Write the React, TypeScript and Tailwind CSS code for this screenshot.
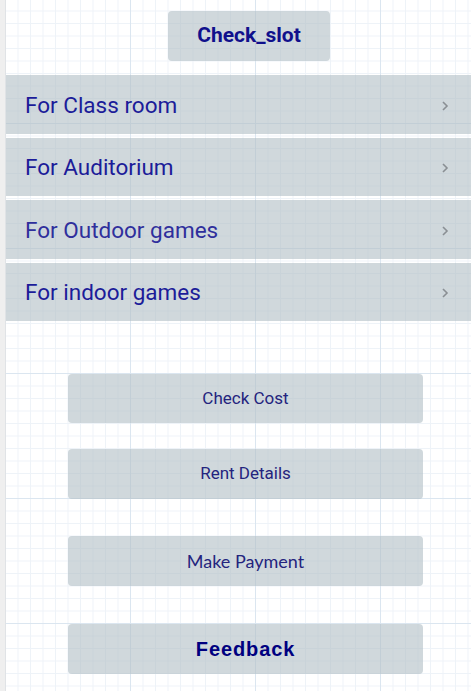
import React from "react";

const rows = [
  { label: "For Class room", color: "text-[#1c1c99]" },
  { label: "For Auditorium", color: "text-[#1c1c99]" },
  { label: "For Outdoor games", color: "text-[#2f2f9c]" },
  { label: "For indoor games", color: "text-[#1c1c99]" },
];

function Chevron() {
  return (
    <svg width="8" height="12" viewBox="0 0 8 12" className="shrink-0">
      <path d="M2 2 L6 6 L2 10" fill="none" stroke="#8a8f94" strokeWidth="1.6" />
    </svg>
  );
}

export default function App() {
  return (
    <div className="flex h-[691px] w-full bg-white overflow-hidden">
      <div className="w-[6px] shrink-0 bg-[#efefef] border-r border-[#e0e3e6]" />
      <div className="relative flex-1 bg-white bg-[linear-gradient(to_right,#dbe6f0_1px,transparent_1px),linear-gradient(to_bottom,#dbe6f0_1px,transparent_1px),linear-gradient(to_right,#eef3f8_1px,transparent_1px),linear-gradient(to_bottom,#eef3f8_1px,transparent_1px)] [background-size:125px_125px,125px_125px,12.5px_12.5px,12.5px_12.5px] [background-position:-1px_-2px,-1px_-2px,-1px_-2px,-1px_-2px]">
        <div className="flex flex-col">
          <div className="flex pt-[11px] pl-[162px]">
            <button className="w-[162px] h-[50px] rounded-[4px] bg-[#b0bec5]/60 font-['Roboto',sans-serif] font-bold text-[21px] text-[#10108c]">
              Check_slot
            </button>
          </div>
          <div className="mt-[14px] flex flex-col gap-[4px]">
            {rows.map((r) => (
              <div
                key={r.label}
                className="h-[58.5px] flex items-center justify-between pl-[19px] pr-[22px] pt-[3px] bg-[#b0bec5]/60"
              >
                <span className={`font-['Roboto',sans-serif] text-[22.5px] ${r.color}`}>{r.label}</span>
                <Chevron />
              </div>
            ))}
          </div>
          <div className="flex flex-col items-start pl-[62px] mt-[53px]">
            <button className="w-[355px] h-[49px] rounded-[4px] bg-[#b0bec5]/60 font-['Roboto',sans-serif] text-[17px] text-[#24247e]">
              Check Cost
            </button>
            <button className="mt-[26px] w-[355px] h-[50px] rounded-[4px] bg-[#b0bec5]/60 font-['Roboto',sans-serif] text-[17px] text-[#24247e]">
              Rent Details
            </button>
            <button className="mt-[37px] w-[355px] h-[50px] rounded-[4px] bg-[#b0bec5]/60 font-['Lato',sans-serif] text-[18px] text-[#24247e]">
              Make Payment
            </button>
            <button className="mt-[38px] w-[355px] h-[50px] rounded-[4px] bg-[#b0bec5]/60 font-['Liberation_Sans',Arial,sans-serif] font-bold text-[20px] text-[#000080] tracking-[0.9px]">
              Feedback
            </button>
          </div>
        </div>
      </div>
    </div>
  );
}
